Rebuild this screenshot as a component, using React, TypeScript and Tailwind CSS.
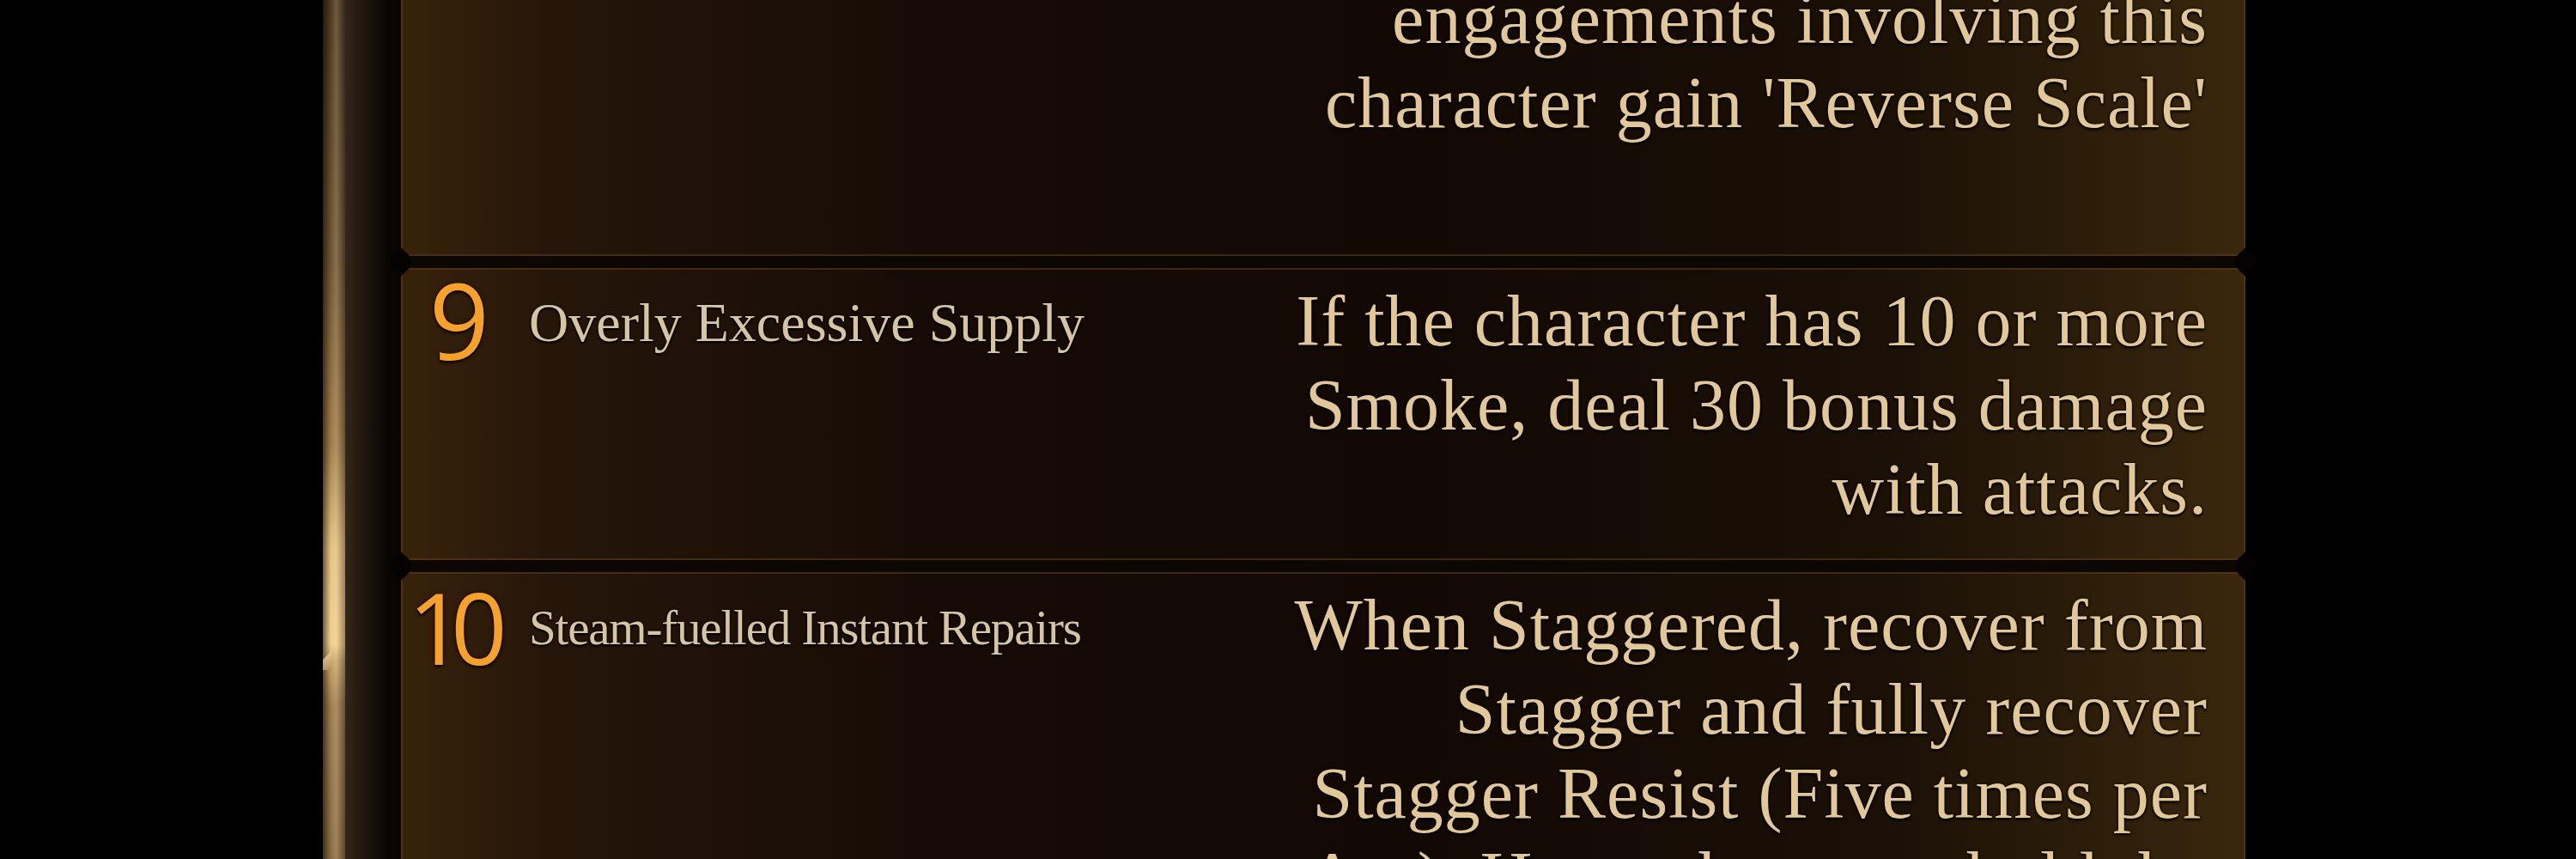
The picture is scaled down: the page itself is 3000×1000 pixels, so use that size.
import React from "react";

type CardProps = {
  num?: string;
  numClass?: string;
  title?: string;
  titleClass?: string;
  titleTop?: string;
  lines: string[];
  heightClass: string;
  descPad?: string;
  rivets?: boolean;
};

function Card({ num, numClass, title, titleClass, titleTop, lines, heightClass, descPad, rivets = true }: CardProps) {
  return (
    <div className={`relative shrink-0 ${heightClass}`}>
      <div className="absolute inset-0 [clip-path:polygon(10px_0,calc(100%_-_10px)_0,100%_10px,100%_calc(100%_-_10px),calc(100%_-_10px)_100%,10px_100%,0_calc(100%_-_10px),0_10px)] bg-[linear-gradient(90deg,#38220a_0%,#26160a_8%,#170c05_28%,#120904_55%,#1a1006_80%,#3a270d_100%)] shadow-[inset_0_0_0_2px_rgba(95,64,26,0.55)]" />
      <div className="relative flex h-full">
        <div className="flex items-start">
          <div
            className={`ml-[18px] mt-[10px] flex w-[100px] justify-center font-['Open_Sans',sans-serif] font-medium leading-[100px] text-[#f5a12c] [text-shadow:0_0_4px_#1a0a00,0_2px_3px_#000] ${numClass ?? "text-[123px]"}`}
          >
            {num ?? ""}
          </div>
          {title ? (
            <div
              className={`ml-[31px] ${titleTop ?? "mt-[32px]"} whitespace-nowrap font-['Liberation_Serif',serif] leading-none text-[#d6c5a3] [text-shadow:0_0_3px_#000,0_2px_2px_#000] ${titleClass ?? "text-[64px]"}`}
            >
              {title}
            </div>
          ) : null}
        </div>
        <div
          className={`ml-auto mr-[44px] ${descPad ?? "pt-[13px]"} text-right font-['Liberation_Serif',serif] text-[84px] leading-[98px] tracking-[1px] text-[#e2c898] [text-shadow:0_0_3px_#000,0_2px_3px_#000]`}
        >
          {lines.map((l, i) => (
            <div key={i} className="whitespace-nowrap">
              {l}
            </div>
          ))}
        </div>
      </div>
      {rivets ? (
        <>
          <div className="absolute -bottom-[19px] -left-[12px] h-6 w-6 rounded-full bg-[#050302]" />
          <div className="absolute -bottom-[19px] -right-[12px] h-6 w-6 rounded-full bg-[#050302]" />
        </>
      ) : null}
    </div>
  );
}

export default function App() {
  return (
    <div className="flex h-[1000px] w-[3000px] overflow-hidden bg-black">
      <div className="w-[376px] shrink-0 bg-black" />
      <div className="relative w-[26px] shrink-0 bg-[linear-gradient(180deg,#4e3a22_0%,#6e5433_30%,#a07c4a_52%,#e6c284_64%,#f2cf90_75%,#c9a56c_77%,#9c7c50_82%,#8a6c44_100%)]">
        <div className="absolute inset-0 bg-[linear-gradient(90deg,rgba(0,0,0,0.55)_0%,rgba(0,0,0,0)_35%,rgba(255,235,190,0.18)_60%,rgba(0,0,0,0.35)_100%)]" />
        <div className="absolute left-0 top-[758px] h-[22px] w-[10px] bg-[linear-gradient(135deg,#fff0c8,#b08850)] [clip-path:polygon(100%_0,0_45%,0_100%,100%_100%)] opacity-80" />
      </div>
      <div className="w-[65px] shrink-0 bg-[linear-gradient(90deg,#34261a_0%,#1c130b_40%,#0b0604_75%,#080403_100%)]" />
      <div className="relative w-[2148px] shrink-0 bg-[#0d0704]">
        <div className="-mt-[120px] flex flex-col gap-[14px]">
          <Card
            lines={["engagements involving this", "character gain 'Reverse Scale'"]}
            heightClass="h-[418px]"
            descPad="pt-[93px]"
          />
          <Card
            num="9"
            title="Overly Excessive Supply"
            lines={["If the character has 10 or more", "Smoke, deal 30 bonus damage", "with attacks."]}
            heightClass="h-[340px]"
          />
          <Card
            num="10"
            numClass="text-[115px] tracking-[-0.14em] pr-[20px] mt-[14px]"
            title="Steam-fuelled Instant Repairs"
            titleClass="text-[57px] tracking-[-1.2px]"
            titleTop="mt-[36px]"
            lines={[
              "When Staggered, recover from",
              "Stagger and fully recover",
              "Stagger Resist (Five times per",
              "Arc). Has a chance to hold the",
            ]}
            heightClass="h-[520px]"
            rivets={false}
          />
        </div>
      </div>
      <div className="flex-1 bg-black" />
    </div>
  );
}
